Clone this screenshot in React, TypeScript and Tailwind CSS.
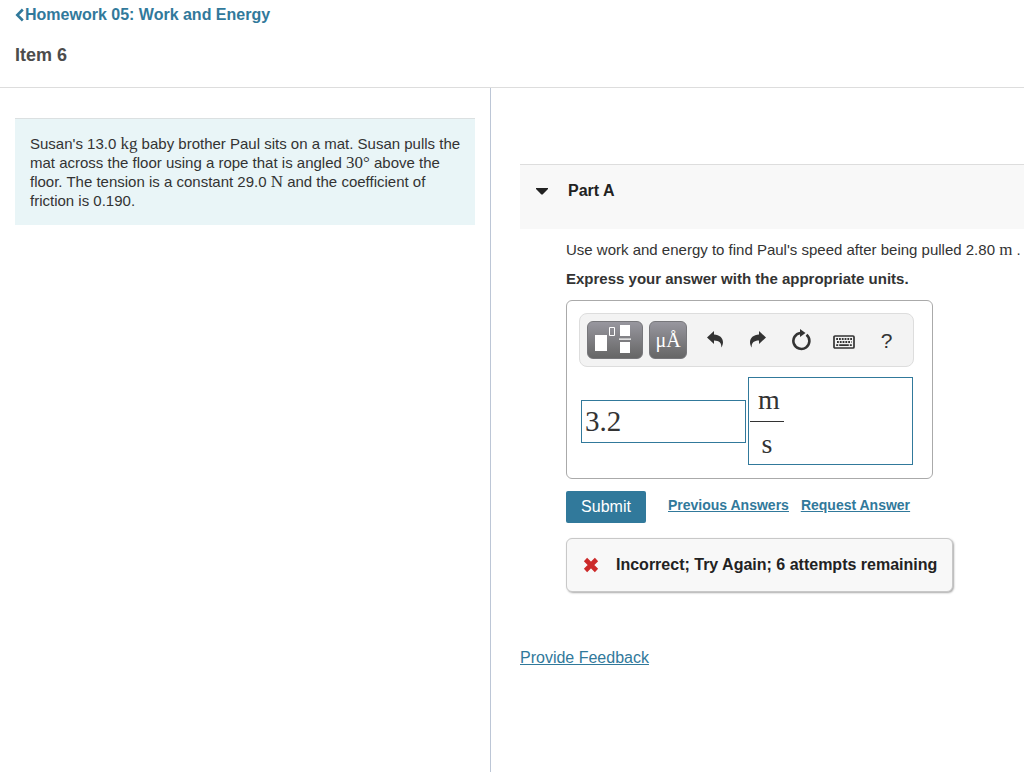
import React, { FC, ReactNode } from 'react'

const App: FC = () => {
  return (
    <div className="flex min-h-screen flex-col bg-white font-['Liberation_Sans',sans-serif] text-[15px] leading-[19px] text-[#333333]">
      <header className="h-[88px] shrink-0 border-b border-[#dddddd] px-[15px] pt-[5px]">
        <a
          href="#assignment"
          className="flex w-fit items-center gap-px text-base leading-5 font-bold text-[#31799b]"
        >
          <BackIcon />
          Homework 05: Work and Energy
        </a>
        <h1 className="mt-5 text-lg leading-5 font-bold text-[#4c4c4c]">Item 6</h1>
      </header>
      <main className="grid grow grid-cols-[491fr_533fr]">
        <section className="border-r border-[#bcc6d6] px-[15px] pt-[30px]">
          <p className="border-t border-[#dbe0e1] bg-[#e9f5f7] py-[15px] pr-2 pl-[15px]">
            Susan's 13.0 <MathText>kg</MathText> baby brother Paul sits on a mat. Susan pulls the
            mat across the floor using a rope that is angled <MathText>30°</MathText> above the
            floor. The tension is a constant 29.0 <MathText>N</MathText> and the coefficient of
            friction is 0.190.
          </p>
        </section>
        <section className="pt-[76px] pl-[29px]">
          <button
            type="button"
            aria-expanded="true"
            className="flex h-[65px] w-full items-start gap-5 border-t border-[#dddddd] bg-[#f8f8f8] pt-4 pl-4 text-base leading-5 font-bold text-[#222222]"
          >
            <svg viewBox="0 0 12 20" className="h-5 w-3" aria-hidden="true">
              <path d="M0 7h12v1L6.600 13.500h-1.200L0 8z" fill="currentColor" />
            </svg>
            Part A
          </button>
          <div className="pl-[46px]">
            <p className="mt-[11px] whitespace-nowrap">
              Use work and energy to find Paul's speed after being pulled 2.80{' '}
              <MathText>m</MathText> .
            </p>
            <p className="mt-[10px] font-bold">Express your answer with the appropriate units.</p>
            <AnswerForm />
          </div>
          <a href="#feedback" className="mt-14 block w-fit text-base leading-5 text-[#31799b] underline">
            Provide Feedback
          </a>
        </section>
      </main>
    </div>
  )
}

export default App

const MathText: FC<{ children: ReactNode }> = ({ children }) => (
  <span className="font-['Liberation_Serif',serif] text-[17px] leading-[19px]">{children}</span>
)

const AnswerForm: FC = () => {
  return (
    <form onSubmit={(e) => e.preventDefault()}>
      <div className="mt-3 w-[367px] rounded-md border border-[#aaaaaa] p-3 pb-[13px]">
        <div className="flex h-[54px] w-[335px] items-center rounded-lg border border-[#dddddd] bg-[#f3f3f3] pl-[7px]">
          <button
            type="button"
            aria-label="Templates"
            className="h-[38px] w-14 rounded-md border border-[#77777b] bg-linear-to-b from-[#98979f] to-[#666666]"
          >
            <TemplatesIcon />
          </button>
          <button
            type="button"
            aria-label="Units"
            className="ml-[6px] h-[38px] w-[38px] rounded-md border border-[#77777b] bg-linear-to-b from-[#98979f] to-[#666666] font-['Liberation_Serif',serif] text-[20px] text-white"
          >
            μÅ
          </button>
          <div className="ml-[6px] flex">
            {toolList.map((tool) => (
              <button
                key={tool.id}
                type="button"
                aria-label={tool.name}
                className="flex h-9 w-[43px] items-center justify-center text-[#333333]"
              >
                {tool.icon}
              </button>
            ))}
          </div>
        </div>
        <div className="mt-[10px] flex items-center gap-[2px] pl-[2px] font-['Liberation_Serif',serif]">
          <input
            type="text"
            aria-label="Value"
            defaultValue="3.2"
            className="h-[43px] w-[165px] border border-[#31799b] px-[3px] text-[29px]"
          />
          <div
            role="textbox"
            tabIndex={0}
            aria-label="Units"
            className="h-[88px] w-[165px] border border-[#31799b] px-px text-[28px] leading-[43px]"
          >
            <div className="w-[34px] text-center">
              <div className="border-b border-[#333333] pl-1">m</div>
              <div>s</div>
            </div>
          </div>
        </div>
      </div>
      <div className="mt-3 flex">
        <button
          type="submit"
          className="h-8 w-20 rounded-xs bg-[#31799b] text-base text-white"
        >
          Submit
        </button>
        <div className="mt-1 ml-[22px] flex gap-3 text-sm leading-5 font-bold text-[#31799b] underline">
          <a href="#previous">Previous Answers</a>
          <a href="#request">Request Answer</a>
        </div>
      </div>
      <div
        role="status"
        className="mt-[15px] flex h-[54px] w-fit items-center gap-4 rounded-md border border-[#c8c8c8] bg-[#f8f8f8] px-[15px] text-base font-bold text-[#222222] shadow-[1px_1px_2px_#aaaaaa]"
      >
        <svg viewBox="0 0 18 18" className="h-[18px] w-[18px]" aria-hidden="true">
          <path d="M3.500 3.500l11 11M14.500 3.500l-11 11" stroke="#cc2a2a" strokeWidth="4.600" />
        </svg>
        Incorrect; Try Again; 6 attempts remaining
      </div>
    </form>
  )
}

const BackIcon: FC = () => (
  <svg viewBox="0 0 9 14" className="h-[14px] w-[9px]" aria-hidden="true">
    <path d="M7.800 1.500L2.300 7l5.500 5.500" fill="none" stroke="currentColor" strokeWidth="2.600" />
  </svg>
)

const TemplatesIcon: FC = () => (
  <svg viewBox="0 0 54 36" className="h-9 w-[54px]" aria-hidden="true">
    <path d="M7 13h12v16H7zM32 3h10v11H32zM32 20h10v11H32zM31 16.500h12v1.300H31z" fill="#fff" />
    <path d="M21.500 5.500h5v8h-5z" fill="none" stroke="#fff" />
  </svg>
)

const UndoIcon: FC = () => (
  <svg viewBox="0 0 18 20" className="h-5 w-[18px]" aria-hidden="true">
    <path
      d="M1 7.500L8 1v3.500c5.500.3 9 3.300 9 7.800 0 1.800-.5 3.400-1.700 5.200.3-4.600-2-6.800-7.300-6.900V14z"
      fill="currentColor"
    />
  </svg>
)

const RedoIcon: FC = () => (
  <svg viewBox="0 0 18 20" className="h-5 w-[18px]" aria-hidden="true">
    <path
      d="M17 7.500L10 1v3.500c-5.500.3-9 3.300-9 7.800 0 1.800.5 3.400 1.700 5.200-.3-4.600 2-6.800 7.300-6.900V14z"
      fill="currentColor"
    />
  </svg>
)

const ResetIcon: FC = () => (
  <svg viewBox="0 0 20 22" className="h-[22px] w-5" aria-hidden="true">
    <path
      d="M15.500 5.800A8 8 0 1 1 9.500 4"
      fill="none"
      stroke="currentColor"
      strokeWidth="2.600"
    />
    <path d="M9 0L14.500 4 9 8z" fill="currentColor" />
  </svg>
)

const KeyboardIcon: FC = () => (
  <svg viewBox="0 0 22 14" className="mt-1 h-[14px] w-[22px]" aria-hidden="true">
    <rect x="1" y="1" width="20" height="12" rx="1" fill="none" stroke="currentColor" strokeWidth="1.700" />
    <path
      d="M3.200 4h16M4 7h14.500"
      stroke="currentColor"
      strokeWidth="1.800"
      strokeDasharray="1.800 1"
    />
    <path d="M3.200 10.200h2M6.200 10.200h9.600M16.800 10.200h2" stroke="currentColor" strokeWidth="1.800" />
  </svg>
)

const toolList = [
  { id: 0, name: 'Undo', icon: <UndoIcon /> },
  { id: 1, name: 'Redo', icon: <RedoIcon /> },
  { id: 2, name: 'Reset', icon: <ResetIcon /> },
  { id: 3, name: 'Keyboard shortcuts', icon: <KeyboardIcon /> },
  { id: 4, name: 'Help', icon: <span className="text-[21px]">?</span> },
]
